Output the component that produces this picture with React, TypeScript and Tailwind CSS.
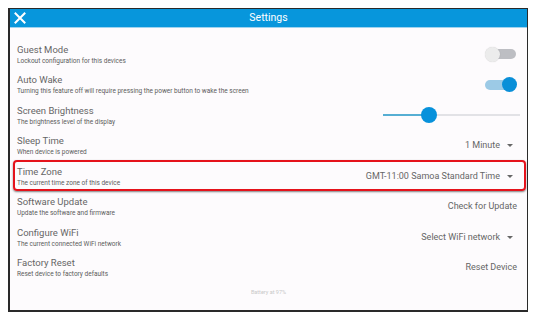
import React from "react";

function Caret() {
  return <span className="ml-[7px] mr-[4px] inline-block w-0 h-0 border-l-[3px] border-r-[3px] border-t-[3px] border-l-transparent border-r-transparent border-t-[#666]" />;
}

function Row({ title, sub, children, highlight }: { title: string; sub: string; children?: React.ReactNode; highlight?: boolean }) {
  return (
    <div className="relative flex items-center h-[30.5px] pl-[7px] pr-[10px]">
      <div className="flex flex-col flex-1">
        <div className="text-[9.5px] leading-[12px] text-[#666]">{title}</div>
        <div className="text-[6.5px] leading-[8px] text-[#5c5c5c] mt-[1px]">{sub}</div>
      </div>
      <div className="flex items-center text-[9px] text-[#666]">{children}</div>
      {highlight && (
        <div className="absolute left-[3px] right-[1px] top-[-1px] bottom-[1px] rounded-[4px] border-2 border-[#e5121b] shadow-[0_1px_2px_rgba(0,0,0,0.5)]" />
      )}
    </div>
  );
}

export default function App() {
  return (
    <div className="w-[536px] h-[317px] bg-white p-[8px] pb-[5px]" style={{ fontFamily: "Roboto, 'Liberation Sans', sans-serif" }}>
      <div className="w-[520px] h-[304px] border-2 border-[#2a2a2a] border-t-[1px] border-r-[1.5px] bg-[#fdfbfd] flex flex-col">
        <div className="h-[19px] bg-[#0796dc] flex items-center relative border-b border-[#9fd3ef]">
          <svg className="absolute left-[4px] top-[3px]" width="12" height="12" viewBox="0 0 12 12">
            <path d="M1.5 1.5 L10.5 10.5 M10.5 1.5 L1.5 10.5" stroke="white" strokeWidth="2" strokeLinecap="square" />
          </svg>
          <div className="w-full text-center text-white text-[10.5px]">Settings</div>
        </div>
        <div className="pt-[11px] flex flex-col">
          <Row title="Guest Mode" sub="Lockout configuration for this devices">
            <div className="relative w-[32px] h-[15px] flex items-center">
              <div className="w-[28px] h-[10px] ml-[3px] rounded-full bg-[#bdbec3]" />
              <div className="absolute left-0 top-0 w-[15px] h-[15px] rounded-full bg-[#ececec] shadow-[0_0_1px_rgba(0,0,0,0.2)]" />
            </div>
          </Row>
          <Row title="Auto Wake" sub="Turning this feature off will require pressing the power button to wake the screen">
            <div className="relative w-[32px] h-[15px] flex items-center">
              <div className="w-[28px] h-[10px] rounded-full bg-[#9ccae6]" />
              <div className="absolute right-0 top-0 w-[15px] h-[15px] rounded-full bg-[#0a8fd8]" />
            </div>
          </Row>
          <Row title="Screen Brightness" sub="The brightness level of the display">
            <div className="relative w-[137px] h-[16px] flex items-center mr-[-3px]">
              <div className="h-[2px] w-[46px] bg-[#56aed3]" />
              <div className="h-[2px] flex-1 bg-[#e2e2e6]" />
              <div className="absolute left-[38px] top-0 w-[16px] h-[16px] rounded-full bg-[#0791db]" />
            </div>
          </Row>
          <Row title="Sleep Time" sub="When device is powered">
            <span>1 Minute</span>
            <Caret />
          </Row>
          <Row title="Time Zone" sub="The current time zone of this device" highlight>
            <span>GMT-11:00 Samoa Standard Time</span>
            <Caret />
          </Row>
          <Row title="Software Update" sub="Update the software and firmware">
            <span>Check for Update</span>
          </Row>
          <Row title="Configure WiFi" sub="The current connected WiFi network">
            <span>Select WiFi network</span>
            <Caret />
          </Row>
          <Row title="Factory Reset" sub="Reset device to factory defaults">
            <span>Reset Device</span>
          </Row>
          <div className="text-center text-[5.5px] text-[#c8c8c8] mt-[5px]">Battery at 97%</div>
        </div>
      </div>
    </div>
  );
}
